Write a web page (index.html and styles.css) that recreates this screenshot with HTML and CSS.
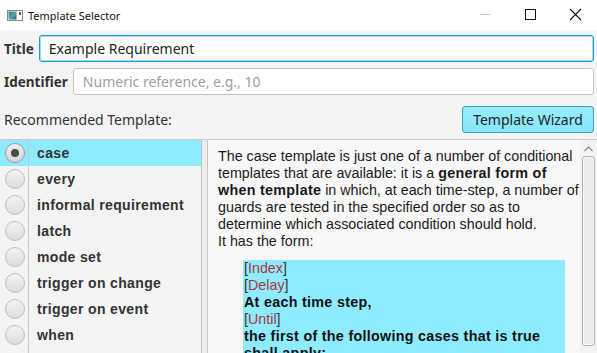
FILE: index.html
```html
<!DOCTYPE html>
<html lang="en">
<head>
  <meta charset="UTF-8" />
  <title>Template Selector</title>
  <link rel="stylesheet" href="styles.css">
</head>
<body>
  <div class="window">
    <div class="titlebar">
      <svg class="app-icon" width="16" height="11" viewBox="0 0 16 11">
        <defs>
          <linearGradient id="ig" x1="0" y1="0" x2="1" y2="1">
            <stop offset="0" stop-color="#2f7d5a"/>
            <stop offset="0.5" stop-color="#4fa6a0"/>
            <stop offset="1" stop-color="#2a5f9e"/>
          </linearGradient>
        </defs>
        <rect x="0.5" y="0.5" width="15" height="10" fill="#fff" stroke="#8a8a8a"/>
        <rect x="1.5" y="1.5" width="8" height="8" fill="url(#ig)"/>
        <rect x="12" y="2" width="2" height="3" fill="#5b6b7a"/>
      </svg>
      <span class="win-title">Template Selector</span>
      <div class="controls">
        <svg width="45" height="30" viewBox="0 0 45 30"><line x1="18" y1="14.5" x2="28" y2="14.5" stroke="#c4c4c4"/></svg>
        <svg width="45" height="30" viewBox="0 0 45 30"><rect x="18.5" y="9.5" width="10" height="10" fill="none" stroke="#111"/></svg>
        <svg width="45" height="30" viewBox="0 0 45 30"><path d="M18 9 L29 20 M29 9 L18 20" stroke="#111" stroke-width="1.1"/></svg>
      </div>
    </div>

    <div class="content">
      <div class="field-row">
        <label class="field-label">Title</label>
        <input class="field focused" type="text" value="Example Requirement" />
      </div>
      <div class="field-row">
        <label class="field-label">Identifier</label>
        <input class="field" type="text" placeholder="Numeric reference, e.g., 10" />
      </div>
      <div class="rec-row">
        <span class="rec-label">Recommended Template:</span>
        <button class="wizard-btn" type="button">Template Wizard</button>
      </div>

      <div class="main">
        <div class="list">
          <div class="item selected"><div class="radio-cell"><span class="radio on"></span></div><div class="item-name">case</div></div>
          <div class="item"><div class="radio-cell"><span class="radio"></span></div><div class="item-name">every</div></div>
          <div class="item"><div class="radio-cell"><span class="radio"></span></div><div class="item-name">informal requirement</div></div>
          <div class="item"><div class="radio-cell"><span class="radio"></span></div><div class="item-name">latch</div></div>
          <div class="item"><div class="radio-cell"><span class="radio"></span></div><div class="item-name">mode set</div></div>
          <div class="item"><div class="radio-cell"><span class="radio"></span></div><div class="item-name">trigger on change</div></div>
          <div class="item"><div class="radio-cell"><span class="radio"></span></div><div class="item-name">trigger on event</div></div>
          <div class="item"><div class="radio-cell"><span class="radio"></span></div><div class="item-name">when</div></div>
          <div class="list-fill"><div class="radio-cell"></div></div>
        </div>
        <div class="divider"></div>
        <div class="doc">
          <div class="doc-body">
            <div class="doc-text">
              <p>The case template is just one of a number of conditional templates that are available: it is a <b>general form of when template</b> in which, at each time-step, a number of guards are tested in the specified order so as to determine which associated condition should hold.<br>It has the form:</p>
              <div class="form-block">
                <div>[<span class="opt">Index</span>]</div>
                <div>[<span class="opt">Delay</span>]</div>
                <div><b>At each time step,</b></div>
                <div>[<span class="opt">Until</span>]</div>
                <div><b>the first of the following cases that is true shall apply:</b></div>
              </div>
            </div>
          </div>
          <div class="scrollbar">
            <svg class="arrow" width="17" height="14" viewBox="0 0 17 14"><path d="M4.5 9 L8.5 5 L12.5 9" fill="none" stroke="#8c8c8c" stroke-width="1.2"/></svg>
            <div class="thumb"></div>
          </div>
        </div>
      </div>
    </div>
  </div>
</body>
</html>
```

FILE: styles.css
```css
body {
  margin: 0;
  width: 597px;
  height: 353px;
  overflow: hidden;
  background: #f4f4f4;
}

.window {
  height: 353px;
  display: flex;
  flex-direction: column;
}

.titlebar {
  height: 30px;
  flex: none;
  background: #fff;
  display: flex;
  align-items: center;
  font-family: "Noto Sans", sans-serif;
  font-size: 11px;
  color: #111;
}

.app-icon {
  margin-left: 7px;
  margin-right: 5px;
}

.controls {
  margin-left: auto;
  display: flex;
}

.content {
  flex: 1;
  display: flex;
  flex-direction: column;
  min-height: 0;
  padding-top: 5px;
  font-family: "Noto Sans", sans-serif;
  color: #222;
}

.field-row {
  display: flex;
  align-items: center;
  gap: 5px;
  padding: 0 3px 0 4px;
  margin-bottom: 6px;
}

.field-label {
  font-weight: bold;
  font-size: 13.5px;
  color: #333;
}

.field {
  flex: 1;
  height: 27px;
  box-sizing: border-box;
  border: 1px solid #c4c4c4;
  border-radius: 3px;
  background: #fff;
  padding: 0 9px;
  font-family: "Noto Sans", sans-serif;
  font-size: 14px;
  color: #222;
  outline: none;
}

.field::placeholder {
  color: #a0a0a0;
}

.field.focused {
  border: 1px solid #0f9ddf;
  box-shadow: inset 0 0 0 1px #a9dcf3;
}

.rec-row {
  display: flex;
  align-items: center;
  justify-content: space-between;
  padding: 0 3px 0 4px;
  margin-top: 5px;
  margin-bottom: 6px;
}

.rec-label {
  font-size: 14px;
  color: #333;
}

.wizard-btn {
  height: 27px;
  width: 132px;
  padding: 0;
  border: 1px solid #3f9fbd;
  border-radius: 3px;
  background: linear-gradient(#97edff, #86e6fb);
  font-family: "Noto Sans", sans-serif;
  font-size: 14px;
  color: #222;
}

.main {
  flex: 1;
  min-height: 0;
  display: flex;
  border-top: 1px solid #c9c9c9;
}

.list {
  width: 201px;
  border-right: 1px solid #c2c2c2;
  display: flex;
  flex-direction: column;
  font-family: "Liberation Sans", sans-serif;
  font-weight: bold;
  font-size: 14px;
  letter-spacing: 0.35px;
  color: #333;
}

.item {
  height: 26px;
  flex: none;
  display: flex;
  align-items: stretch;
}

.item.selected {
  background: #8eebff;
}

.radio-cell {
  width: 29px;
  border-right: 1px solid #c8c8c8;
  display: flex;
  align-items: center;
  justify-content: center;
  padding-left: 2px;
  box-sizing: border-box;
}

.list-fill {
  flex: 1;
  display: flex;
}

.radio {
  width: 18px;
  height: 18px;
  border-radius: 50%;
  border: 1px solid #bdbdbd;
  background: linear-gradient(#f3f3f3, #dddddd);
  display: flex;
  align-items: center;
  justify-content: center;
}

.radio.on {
  border-color: #9a9a9a;
  background: linear-gradient(#f0f0f0, #d6d6d6);
}

.radio.on::after {
  content: "";
  width: 8px;
  height: 8px;
  border-radius: 50%;
  background: #4a4a4a;
}

.item-name {
  padding-left: 8px;
  display: flex;
  align-items: center;
}

.divider {
  width: 5px;
  background: #ececec;
}

.doc {
  flex: 1;
  display: flex;
  border-left: 1px solid #c6c6c6;
  background: #f8f8f8;
  min-width: 0;
}

.doc-body {
  flex: 1;
  overflow: hidden;
  min-width: 0;
}

.doc-text {
  width: 368px;
  padding: 8px 0 0 10px;
  font-family: "Liberation Sans", sans-serif;
  font-size: 14.3px;
  line-height: 17px;
  color: #1a1a1a;
}

.doc-text p {
  margin: 0;
}

.doc-text b {
  letter-spacing: 0.3px;
}

.form-block {
  width: 322px;
  margin: 10px 0 0 25px;
  padding-left: 1px;
  box-sizing: border-box;
  background: #8eebff;
  color: #333;
}

.form-block b {
  color: #111;
}

.opt {
  color: #a8383b;
}

.scrollbar {
  width: 17px;
  flex: none;
  display: flex;
  flex-direction: column;
  align-items: center;
  background: #f3f3f3;
}

.arrow {
  margin-top: 2px;
}

.thumb {
  width: 11px;
  height: 188px;
  border: 1px solid #b4b4b4;
  border-radius: 3px;
  background: #ececec;
  box-shadow: inset 0 0 0 1px #f8f8f8;
}
```
